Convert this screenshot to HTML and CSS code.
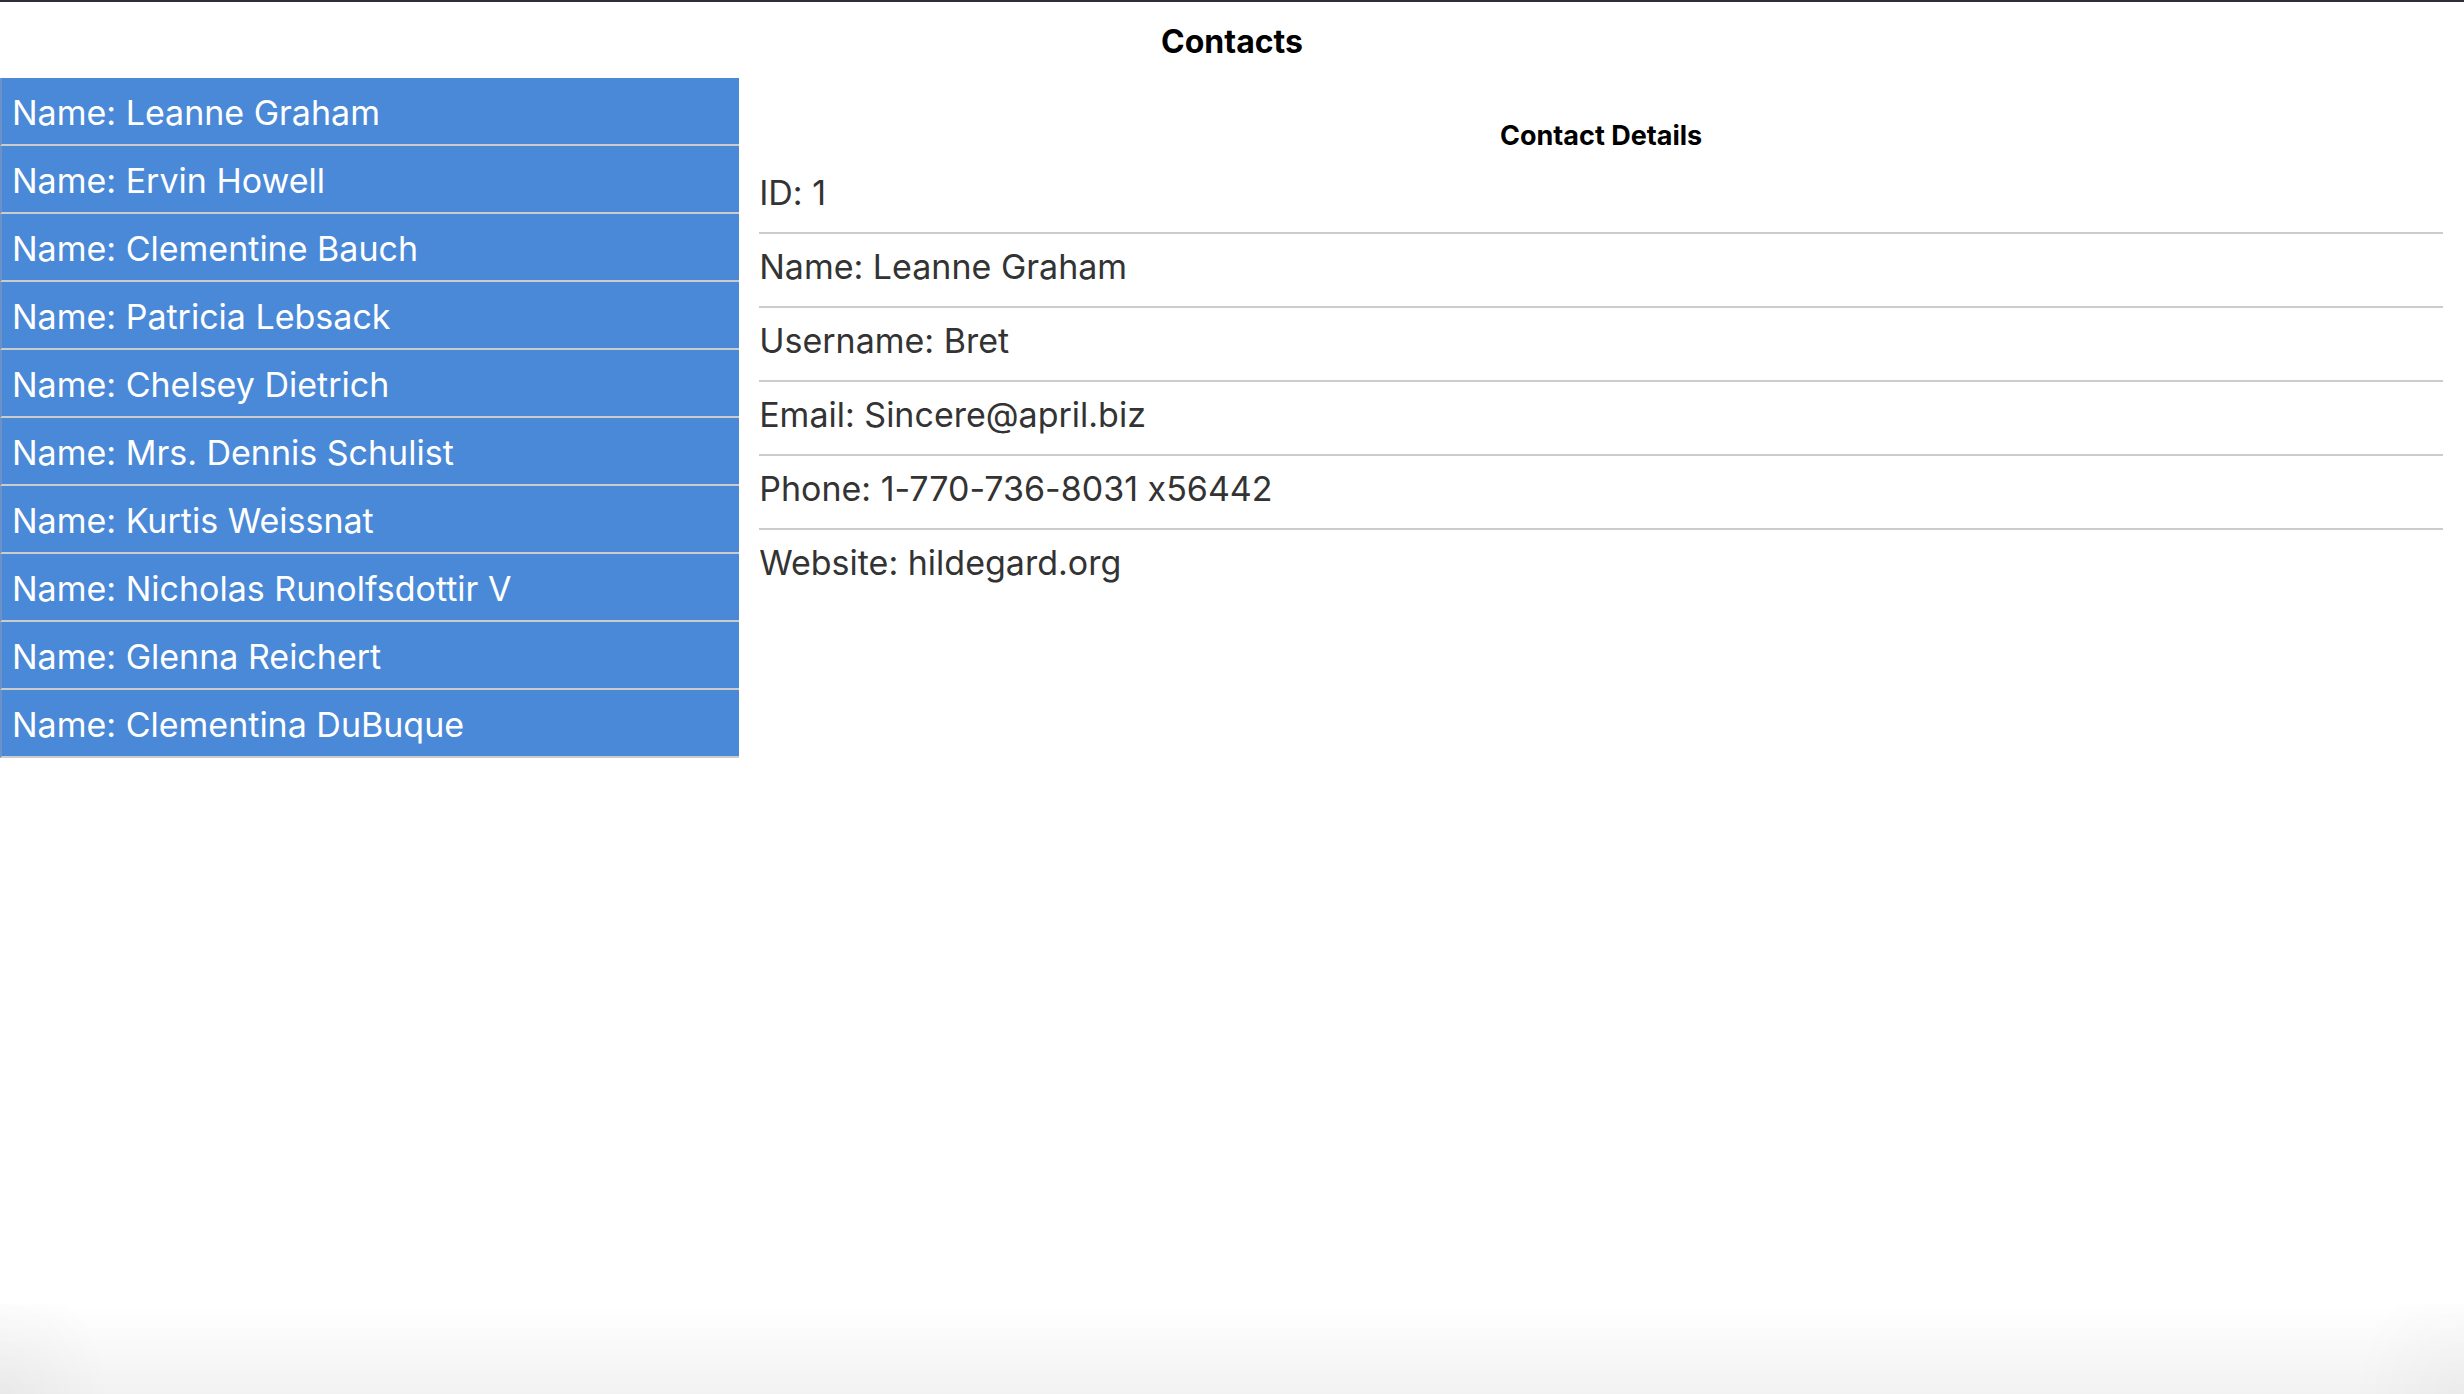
FILE: index.html
```html
<!DOCTYPE html>
<html lang="en">
<head>
<meta charset="utf-8">
<title>Contacts</title>
<link rel="stylesheet" href="styles.css">
</head>
<body>
<div class="app">
  <h1 class="title">Contacts</h1>
  <div class="main">
    <ul class="contact-list">
      <li class="contact-item">Name: Leanne Graham</li>
      <li class="contact-item">Name: Ervin Howell</li>
      <li class="contact-item">Name: Clementine Bauch</li>
      <li class="contact-item">Name: Patricia Lebsack</li>
      <li class="contact-item">Name: Chelsey Dietrich</li>
      <li class="contact-item">Name: Mrs. Dennis Schulist</li>
      <li class="contact-item">Name: Kurtis Weissnat</li>
      <li class="contact-item">Name: Nicholas Runolfsdottir V</li>
      <li class="contact-item">Name: Glenna Reichert</li>
      <li class="contact-item">Name: Clementina DuBuque</li>
    </ul>
    <section class="details">
      <h2 class="details-title">Contact Details</h2>
      <ul class="detail-list">
        <li class="detail-item">ID: 1</li>
        <li class="detail-item">Name: Leanne Graham</li>
        <li class="detail-item">Username: Bret</li>
        <li class="detail-item">Email: Sincere@april.biz</li>
        <li class="detail-item">Phone: 1-770-736-8031 x56442</li>
        <li class="detail-item">Website: hildegard.org</li>
      </ul>
    </section>
  </div>
</div>
<div class="window-shade"></div>
</body>
</html>
```
FILE: styles.css
```css
html, body {
  margin: 0;
  padding: 0;
  background: #ffffff;
}

body {
  font-family: Inter, "Noto Sans", "Liberation Sans", sans-serif;
  font-feature-settings: "calt" 0;
  min-height: 1394px;
}

.app {
  border-top: 2px solid #2c2f37;
}

.title {
  margin: 0;
  padding-top: 3px;
  height: 73px;
  line-height: 73px;
  font-size: 32px;
  font-weight: 700;
  text-align: center;
  color: #000000;
}

.main {
  display: flex;
  align-items: flex-start;
}

.contact-list {
  list-style: none;
  margin: 0;
  padding: 0;
  width: 30%;
  flex: none;
}

.contact-item {
  padding-top: 3px;
  height: 63px;
  line-height: 63px;
  padding-left: 10px;
  font-size: 34px;
  color: #ffffff;
  background: #4a89d7;
  border-left: 2px solid #6a91c8;
  border-bottom: 2px solid #cccccc;
  white-space: nowrap;
}

.details {
  flex: 1;
  margin: 0 21px 0 20px;
}

.details-title {
  margin: 0;
  padding: 38px 0 4px;
  line-height: 40px;
  font-size: 27px;
  font-weight: 700;
  text-align: center;
  color: #000000;
}

.detail-list {
  list-style: none;
  margin: 0;
  padding: 0;
}

.detail-item {
  padding: 9px 0 15px;
  line-height: 48px;
  font-size: 34px;
  color: #333333;
  border-bottom: 2px solid #cccccc;
}

.detail-item:last-child {
  border-bottom: none;
}

.window-shade {
  position: fixed;
  left: 0;
  right: 0;
  bottom: 0;
  height: 90px;
  pointer-events: none;
  background:
    radial-gradient(ellipse 110px 120px at 0 100%, rgba(0, 0, 0, 0.04), rgba(0, 0, 0, 0)),
    radial-gradient(ellipse 110px 120px at 100% 100%, rgba(0, 0, 0, 0.03), rgba(0, 0, 0, 0)),
    linear-gradient(to bottom, rgba(0, 0, 0, 0), rgba(0, 0, 0, 0.05));
}
```
